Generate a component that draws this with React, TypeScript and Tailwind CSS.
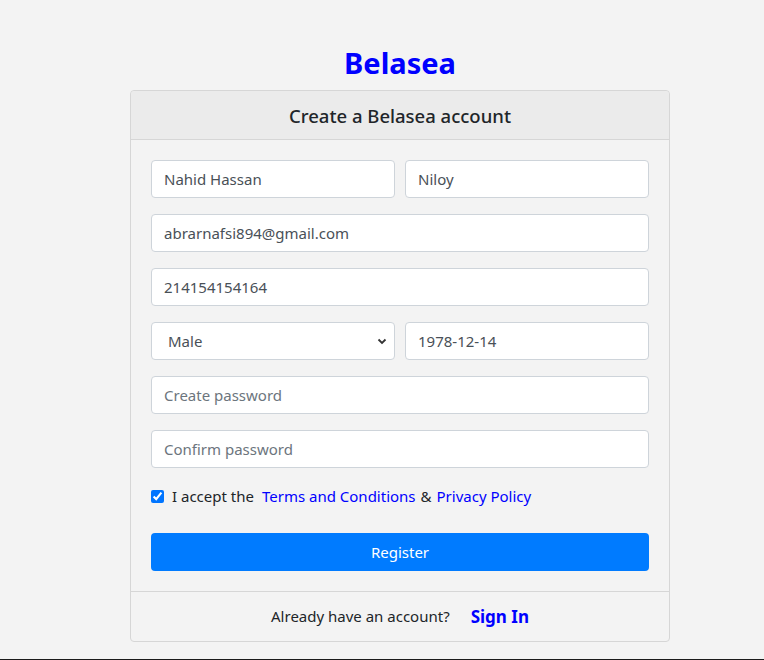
import React from "react";

const inputCls =
  "block w-full h-[38px] px-3 bg-white border border-[#ced4da] rounded-[4px] text-[15px] text-[#495057] placeholder:text-[#6c757d] outline-none";

export default function App() {
  return (
    <div
      className="h-[660px] bg-[#f3f3f3] border-b border-[#1a1a1a] flex flex-col items-center pl-[36px]"
      style={{ fontFamily: '"Noto Sans", "Open Sans", sans-serif' }}
    >
      <h2 className="mt-[43px] h-[47px] text-[29px] leading-[40px] font-bold text-[#0000ff]">Belasea</h2>
      <div className="w-[540px] border border-[#d6d6d6] rounded-[4px] flex flex-col">
        <div className="h-[49px] pt-[1px] bg-[#ebebeb] border-b border-[#d6d6d6] flex items-center justify-center text-[18.5px] font-medium text-[#212529] rounded-t-[4px]">
          Create a Belasea account
        </div>
        <div className="px-5 pt-5 pb-5 flex flex-col gap-4">
          <div className="grid grid-cols-2 gap-[10px]">
            <input className={inputCls} defaultValue="Nahid Hassan" />
            <input className={inputCls} defaultValue="Niloy" />
          </div>
          <input className={inputCls} defaultValue="abrarnafsi894@gmail.com" />
          <input className={inputCls} defaultValue="214154154164" />
          <div className="grid grid-cols-2 gap-[10px]">
            <div className="relative">
              <select className={inputCls + " appearance-none pl-4"} defaultValue="Male">
                <option>Male</option>
                <option>Female</option>
              </select>
              <svg
                className="absolute right-[8px] top-[16px] pointer-events-none"
                width="10"
                height="7"
                viewBox="0 0 10 7"
                fill="none"
              >
                <path d="M1.5 1.5 L5 5 L8.5 1.5" stroke="#333" strokeWidth="1.8" />
              </svg>
            </div>
            <input className={inputCls} defaultValue="1978-12-14" />
          </div>
          <input className={inputCls} placeholder="Create password" type="password" />
          <input className={inputCls} placeholder="Confirm password" type="password" />
          <div className="flex items-center h-[24px] text-[15px] text-[#212529]">
            <input type="checkbox" defaultChecked className="w-[13px] h-[13px] m-0 accent-[#0075ff]" />
            <span className="ml-[8px]">I accept the</span>
            <a className="ml-[8px] text-[#0000ff]" href="#">Terms and Conditions</a>
            <span className="mx-[5px]">&amp;</span>
            <a className="text-[#0000ff]" href="#">Privacy Policy</a>
          </div>
          <button className="mt-[9px] h-[38px] w-full bg-[#007bff] rounded-[4px] text-white text-[15px]">
            Register
          </button>
        </div>
        <div className="h-[50px] border-t border-[#d6d6d6] flex items-center justify-center text-[15px] text-[#212529]">
          <span>Already have an account?</span>
          <a href="#" className="ml-[21px] text-[17px] font-bold text-[#0000ff]">Sign In</a>
        </div>
      </div>
    </div>
  );
}
